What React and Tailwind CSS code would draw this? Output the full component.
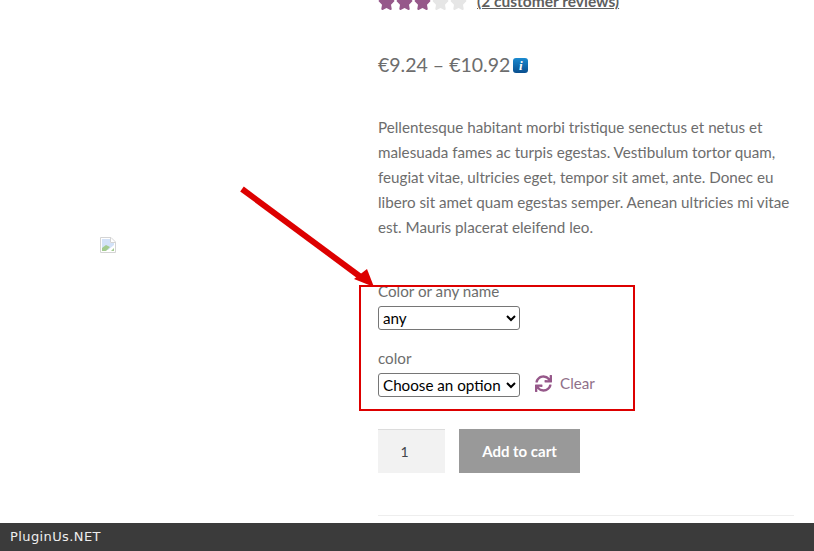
import React from 'react';
import { FaStar, FaSync } from 'react-icons/fa';

const Stars = () => (
  <div className="flex gap-[1px] text-[17px]">
    <FaStar className="text-[#96588a]" />
    <FaStar className="text-[#96588a]" />
    <FaStar className="text-[#96588a]" />
    <FaStar className="text-[#e6e6e6]" />
    <FaStar className="text-[#e6e6e6]" />
  </div>
);

// broken image placeholder
const BrokenImage = () => (
  <svg width="16" height="16" viewBox="0 0 16 16">
    <path d="M0.5 0.5H11L15.5 5V15.5H0.5Z" fill="#fff" stroke="#d4d4d4" />
    <path d="M2 2H10V6H14V8L8 13H2Z" fill="#d3e2f8" />
    <path d="M2 14V11L6 8L10 10L6 14Z" fill="#a3cb90" />
    <path d="M11 14L14 11V14Z" fill="#a3cb90" />
    <path d="M10.5 1V5.5H15" fill="#fff" stroke="#d4d4d4" />
  </svg>
);

const InfoBadge = () => (
  <span className="flex h-[15px] w-[15px] items-center justify-center rounded-[3px] bg-gradient-to-b from-[#1a8ad0] to-[#0a4f8f] font-['Liberation_Serif',serif] text-[13px] font-bold italic leading-none text-white">
    i
  </span>
);

const Field = ({ label, children }) => (
  <div>
    <div className="mb-[4px] h-[22px] text-[15.2px] leading-[22px] text-[#6d6d6d]">{label}</div>
    {children}
  </div>
);

const selectClass = "h-[24px] w-[142px] rounded-[3px] border border-[#767676] bg-white text-[15.2px] text-black";

export default function App() {
  return (
    <div className="relative flex h-[551px] w-[814px] flex-col overflow-hidden bg-white font-['Lato',sans-serif]">
      <div className="flex min-h-0 flex-1">
        {/* Gallery */}
        <div className="w-[378px] shrink-0 pl-[100px] pt-[237px]">
          <BrokenImage />
        </div>

        {/* Summary */}
        <div className="w-[416px] shrink-0 text-[#6d6d6d]">
          <div className="-mt-[6px] flex h-[16px] items-center gap-[10px]">
            <Stars />
            <a className="text-[15.5px] font-bold text-[#5f5f5f] underline">(2 customer reviews)</a>
          </div>

          <div className="mt-[40px] flex h-[30px] items-center gap-[3px]">
            <span className="text-[19.5px] text-[#6d6d6d]">€9.24 – €10.92</span>
            <InfoBadge />
          </div>

          <p className="mt-[35px] text-[15.2px] leading-[25px]">
            Pellentesque habitant morbi tristique senectus et netus et malesuada fames ac turpis egestas. Vestibulum tortor quam, feugiat vitae, ultricies eget, tempor sit amet, ante. Donec eu libero sit amet quam egestas semper. Aenean ultricies mi vitae est. Mauris placerat eleifend leo.
          </p>

          <div className="mt-[40px] flex flex-col gap-[17px]">
            <Field label="Color or any name">
              <select className={selectClass} defaultValue="any">
                <option>any</option>
              </select>
            </Field>
            <Field label="color">
              <div className="flex items-center gap-[15px]">
                <select className={selectClass} defaultValue="Choose an option">
                  <option>Choose an option</option>
                </select>
                <div className="-mt-[3px] flex items-center gap-[8px] text-[#96588a]">
                  <FaSync className="text-[17px]" />
                  <span className="text-[15.2px] text-[#8f7089]">Clear</span>
                </div>
              </div>
            </Field>
          </div>

          <div className="mt-[32px] flex gap-[14px]">
            <div className="flex h-[44px] w-[67px] items-center justify-center border-t border-[#dcdcdc] bg-[#f2f2f2] pr-[14px] text-[14px] text-[#43454b]">
              1
            </div>
            <button className="h-[44px] w-[121px] bg-[#999999] text-[15px] font-bold text-white">Add to cart</button>
          </div>

          <div className="mt-[42px] border-t border-[#eeeeee]" />
        </div>
      </div>

      {/* Footer */}
      <div className="flex h-[28px] shrink-0 items-center bg-[#3b3b3b] pl-[10px] font-['DejaVu_Sans',sans-serif] text-[13px] tracking-[0.4px] text-[#eeeeee]">
        PluginUs.NET
      </div>

      {/* Annotation overlay */}
      <div className="absolute left-[359px] top-[285px] h-[126px] w-[276px] border-2 border-[#dd0000]" />
      <svg className="absolute left-[236px] top-[182px]" width="140" height="110" viewBox="0 0 140 110">
        <path d="M6 7L126 96" stroke="#dd0000" strokeWidth="6" fill="none" />
        <path d="M131 87L138 105L118 97Z" fill="#dd0000" />
      </svg>
    </div>
  );
}
